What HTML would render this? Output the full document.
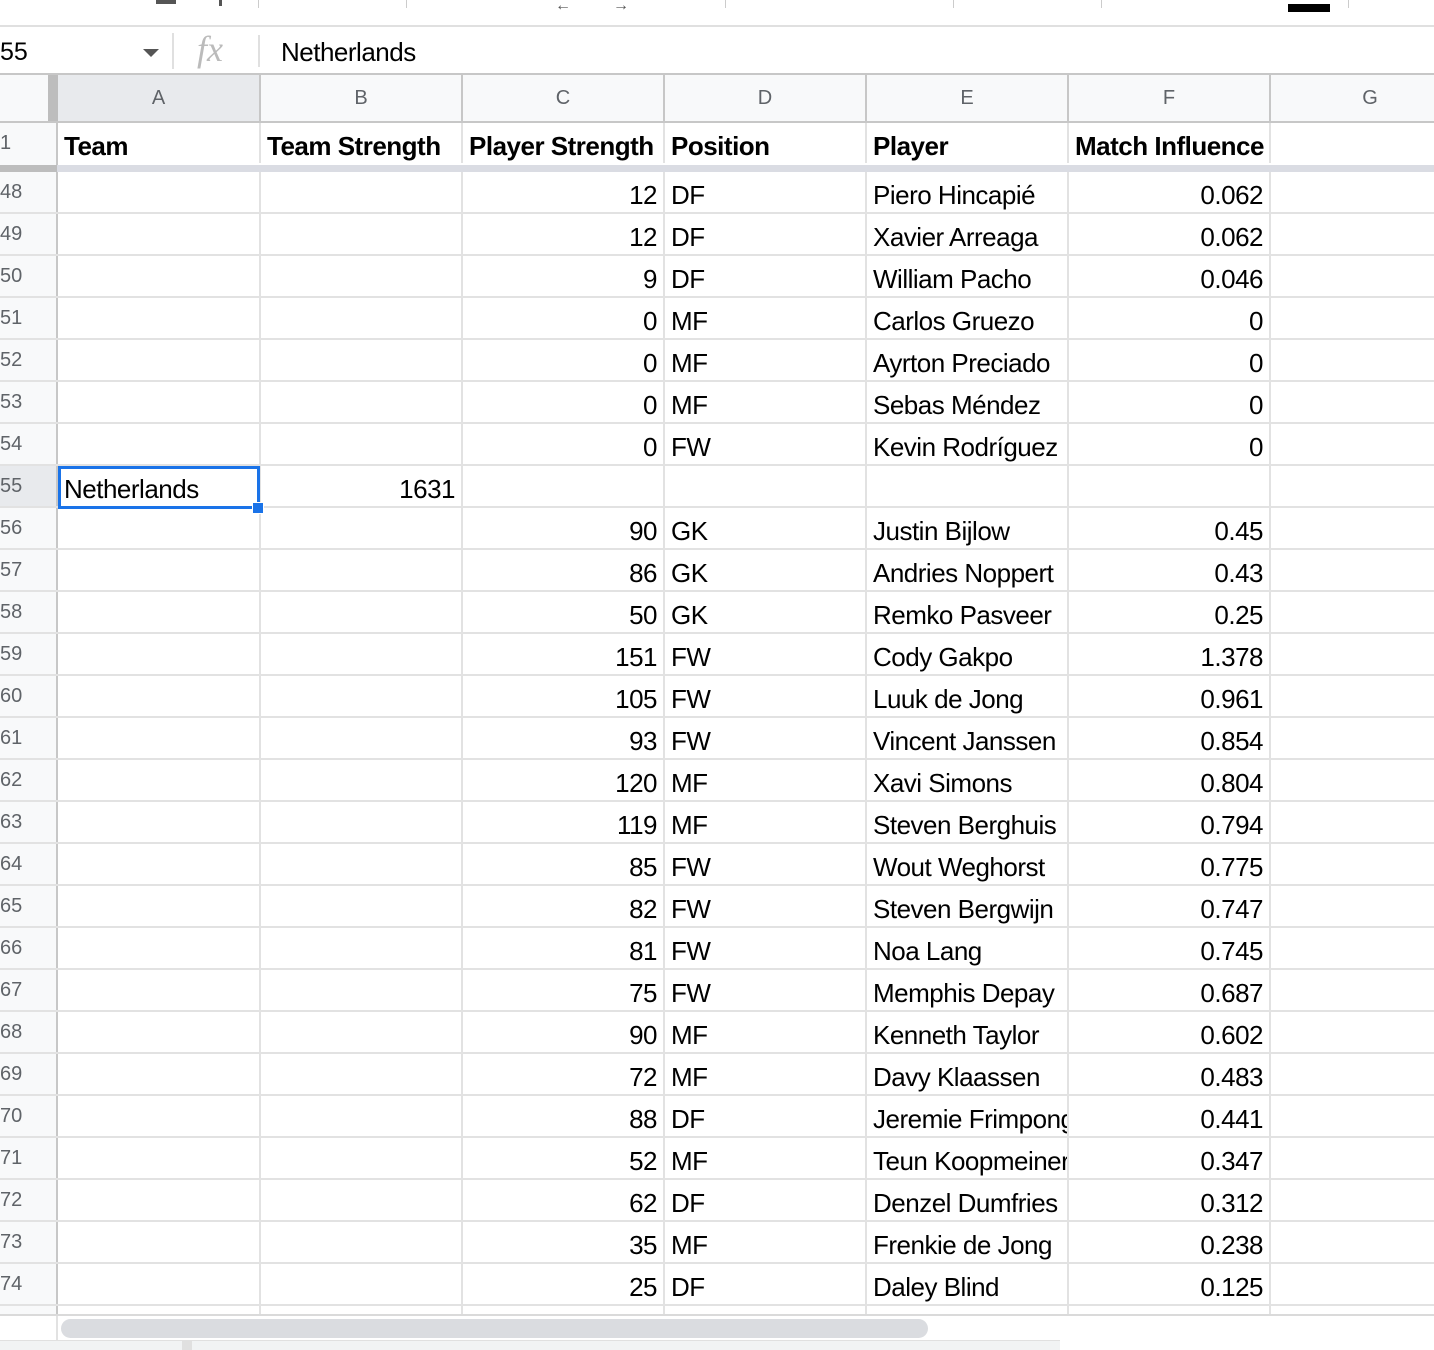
<!DOCTYPE html>
<html><head><meta charset="utf-8"><style>
*{box-sizing:border-box;margin:0;padding:0}
body{width:1434px;height:1350px;overflow:hidden;background:#fff;font-family:"Liberation Sans",Arial,sans-serif;position:relative}
.tb{position:absolute;left:0;top:0;width:1434px;height:27px;border-bottom:2px solid #e0e0e0;background:#fff}
.fb{position:absolute;left:0;top:27px;width:1434px;height:48px;border-bottom:2px solid #c7c7c7;background:#fff}
.hdr{position:absolute;top:75px;left:0;height:48px;width:1434px;background:#f8f9fa;border-bottom:2px solid #c7c7c7}
.hdr div{position:absolute;top:0;height:46px;border-right:2px solid #c7c7c7;text-align:center;line-height:46px;font-size:20px;color:#5f6368}
.row{position:absolute;left:0;width:1434px;height:42px;border-bottom:2px solid #e2e2e2}
.row div{position:absolute;top:0;height:40px;border-right:2px solid #e2e2e2;font-size:26px;line-height:46px;color:#000;white-space:nowrap;overflow:hidden;padding:0 6px;letter-spacing:-0.5px}
.row .n{left:0;width:58px;background:#f8f9fa;border-right:2px solid #c7c7c7;color:#5f6368;font-size:20px;padding:0;line-height:40px;letter-spacing:0}
.a{left:58px;width:203px}.b{left:261px;width:202px;text-align:right}.c{left:463px;width:202px;text-align:right}
.d{left:665px;width:202px}.e{left:867px;width:202px}.f{left:1069px;width:202px;text-align:right}.g{left:1271px;width:165px}
</style></head><body>
<div class="tb">
<div style="position:absolute;left:156px;top:0;width:20px;height:4px;background:#555"></div>
<div style="position:absolute;left:219px;top:0;width:3px;height:6px;background:#555"></div>
<div style="position:absolute;left:258px;top:0;width:1px;height:8px;background:#ccc"></div>
<div style="position:absolute;left:406px;top:0;width:1px;height:8px;background:#ccc"></div>
<div style="position:absolute;left:555px;top:1px;font-size:16px;color:#555;line-height:10px">&#8592;</div>
<div style="position:absolute;left:613px;top:1px;font-size:16px;color:#555;line-height:10px">&#8594;</div>
<div style="position:absolute;left:725px;top:0;width:1px;height:8px;background:#ccc"></div>
<div style="position:absolute;left:953px;top:0;width:1px;height:8px;background:#ccc"></div>
<div style="position:absolute;left:1101px;top:0;width:1px;height:8px;background:#ccc"></div>
<div style="position:absolute;left:1288px;top:4px;width:42px;height:8px;background:#000"></div>
<div style="position:absolute;left:1348px;top:0;width:1px;height:8px;background:#ccc"></div>
</div>
<div class="fb">
<div style="position:absolute;left:0;top:0;font-size:25px;line-height:50px">55</div>
<div style="position:absolute;left:143px;top:22px;width:0;height:0;border-left:8px solid transparent;border-right:8px solid transparent;border-top:8px solid #555"></div>
<div style="position:absolute;left:172px;top:6px;width:2px;height:36px;background:#e0e0e0"></div>
<div style="position:absolute;left:197px;top:0;font-family:'Liberation Serif',serif;font-style:italic;font-size:36px;line-height:44px;color:#bbb">fx</div>
<div style="position:absolute;left:258px;top:8px;width:2px;height:32px;background:#e0e0e0"></div>
<div style="position:absolute;left:281px;top:0;font-size:26px;line-height:50px;letter-spacing:-0.5px">Netherlands</div>
</div>
<div class="hdr">
<div style="left:0;width:57px;border-right:none"></div>
<div style="left:48px;width:10px;background:#bdbdbd;border:none"></div>
<div style="left:58px;width:203px;background:#e8eaed">A</div>
<div style="left:261px;width:202px">B</div>
<div style="left:463px;width:202px">C</div>
<div style="left:665px;width:202px">D</div>
<div style="left:867px;width:202px">E</div>
<div style="left:1069px;width:202px">F</div>
<div style="left:1271px;width:200px">G</div>
</div>
<div class="row" style="top:123px;height:43px;border-bottom:none"><div class="n" style="height:43px;line-height:40px">1</div><div class="a" style="font-weight:bold">Team</div><div class="b" style="font-weight:bold;text-align:left">Team Strength</div><div class="c" style="font-weight:bold;text-align:left;padding-left:6px">Player Strength</div><div class="d" style="font-weight:bold">Position</div><div class="e" style="font-weight:bold">Player</div><div class="f" style="font-weight:bold;text-align:left;padding-left:6px">Match Influence</div><div class="g"></div></div>
<div style="position:absolute;top:165px;left:0;width:57px;height:7px;background:#bdbdbd"></div>
<div style="position:absolute;top:165px;left:57px;width:1377px;height:7px;background:#dadce3"></div>
<div class="row" style="top:172px"><div class="n">48</div><div class="a"></div><div class="b"></div><div class="c">12</div><div class="d">DF</div><div class="e">Piero Hincapié</div><div class="f">0.062</div><div class="g"></div></div>
<div class="row" style="top:214px"><div class="n">49</div><div class="a"></div><div class="b"></div><div class="c">12</div><div class="d">DF</div><div class="e">Xavier Arreaga</div><div class="f">0.062</div><div class="g"></div></div>
<div class="row" style="top:256px"><div class="n">50</div><div class="a"></div><div class="b"></div><div class="c">9</div><div class="d">DF</div><div class="e">William Pacho</div><div class="f">0.046</div><div class="g"></div></div>
<div class="row" style="top:298px"><div class="n">51</div><div class="a"></div><div class="b"></div><div class="c">0</div><div class="d">MF</div><div class="e">Carlos Gruezo</div><div class="f">0</div><div class="g"></div></div>
<div class="row" style="top:340px"><div class="n">52</div><div class="a"></div><div class="b"></div><div class="c">0</div><div class="d">MF</div><div class="e">Ayrton Preciado</div><div class="f">0</div><div class="g"></div></div>
<div class="row" style="top:382px"><div class="n">53</div><div class="a"></div><div class="b"></div><div class="c">0</div><div class="d">MF</div><div class="e">Sebas Méndez</div><div class="f">0</div><div class="g"></div></div>
<div class="row" style="top:424px"><div class="n">54</div><div class="a"></div><div class="b"></div><div class="c">0</div><div class="d">FW</div><div class="e">Kevin Rodríguez</div><div class="f">0</div><div class="g"></div></div>
<div class="row" style="top:466px"><div class="n" style="background:#e8eaed">55</div><div class="a">Netherlands</div><div class="b">1631</div><div class="c"></div><div class="d"></div><div class="e"></div><div class="f"></div><div class="g"></div></div>
<div class="row" style="top:508px"><div class="n">56</div><div class="a"></div><div class="b"></div><div class="c">90</div><div class="d">GK</div><div class="e">Justin Bijlow</div><div class="f">0.45</div><div class="g"></div></div>
<div class="row" style="top:550px"><div class="n">57</div><div class="a"></div><div class="b"></div><div class="c">86</div><div class="d">GK</div><div class="e">Andries Noppert</div><div class="f">0.43</div><div class="g"></div></div>
<div class="row" style="top:592px"><div class="n">58</div><div class="a"></div><div class="b"></div><div class="c">50</div><div class="d">GK</div><div class="e">Remko Pasveer</div><div class="f">0.25</div><div class="g"></div></div>
<div class="row" style="top:634px"><div class="n">59</div><div class="a"></div><div class="b"></div><div class="c">151</div><div class="d">FW</div><div class="e">Cody Gakpo</div><div class="f">1.378</div><div class="g"></div></div>
<div class="row" style="top:676px"><div class="n">60</div><div class="a"></div><div class="b"></div><div class="c">105</div><div class="d">FW</div><div class="e">Luuk de Jong</div><div class="f">0.961</div><div class="g"></div></div>
<div class="row" style="top:718px"><div class="n">61</div><div class="a"></div><div class="b"></div><div class="c">93</div><div class="d">FW</div><div class="e">Vincent Janssen</div><div class="f">0.854</div><div class="g"></div></div>
<div class="row" style="top:760px"><div class="n">62</div><div class="a"></div><div class="b"></div><div class="c">120</div><div class="d">MF</div><div class="e">Xavi Simons</div><div class="f">0.804</div><div class="g"></div></div>
<div class="row" style="top:802px"><div class="n">63</div><div class="a"></div><div class="b"></div><div class="c">119</div><div class="d">MF</div><div class="e">Steven Berghuis</div><div class="f">0.794</div><div class="g"></div></div>
<div class="row" style="top:844px"><div class="n">64</div><div class="a"></div><div class="b"></div><div class="c">85</div><div class="d">FW</div><div class="e">Wout Weghorst</div><div class="f">0.775</div><div class="g"></div></div>
<div class="row" style="top:886px"><div class="n">65</div><div class="a"></div><div class="b"></div><div class="c">82</div><div class="d">FW</div><div class="e">Steven Bergwijn</div><div class="f">0.747</div><div class="g"></div></div>
<div class="row" style="top:928px"><div class="n">66</div><div class="a"></div><div class="b"></div><div class="c">81</div><div class="d">FW</div><div class="e">Noa Lang</div><div class="f">0.745</div><div class="g"></div></div>
<div class="row" style="top:970px"><div class="n">67</div><div class="a"></div><div class="b"></div><div class="c">75</div><div class="d">FW</div><div class="e">Memphis Depay</div><div class="f">0.687</div><div class="g"></div></div>
<div class="row" style="top:1012px"><div class="n">68</div><div class="a"></div><div class="b"></div><div class="c">90</div><div class="d">MF</div><div class="e">Kenneth Taylor</div><div class="f">0.602</div><div class="g"></div></div>
<div class="row" style="top:1054px"><div class="n">69</div><div class="a"></div><div class="b"></div><div class="c">72</div><div class="d">MF</div><div class="e">Davy Klaassen</div><div class="f">0.483</div><div class="g"></div></div>
<div class="row" style="top:1096px"><div class="n">70</div><div class="a"></div><div class="b"></div><div class="c">88</div><div class="d">DF</div><div class="e">Jeremie Frimpong</div><div class="f">0.441</div><div class="g"></div></div>
<div class="row" style="top:1138px"><div class="n">71</div><div class="a"></div><div class="b"></div><div class="c">52</div><div class="d">MF</div><div class="e">Teun Koopmeiners</div><div class="f">0.347</div><div class="g"></div></div>
<div class="row" style="top:1180px"><div class="n">72</div><div class="a"></div><div class="b"></div><div class="c">62</div><div class="d">DF</div><div class="e">Denzel Dumfries</div><div class="f">0.312</div><div class="g"></div></div>
<div class="row" style="top:1222px"><div class="n">73</div><div class="a"></div><div class="b"></div><div class="c">35</div><div class="d">MF</div><div class="e">Frenkie de Jong</div><div class="f">0.238</div><div class="g"></div></div>
<div class="row" style="top:1264px"><div class="n">74</div><div class="a"></div><div class="b"></div><div class="c">25</div><div class="d">DF</div><div class="e">Daley Blind</div><div class="f">0.125</div><div class="g"></div></div>
<div class="row" style="top:1306px;height:10px;border-bottom:none"><div class="n" style="height:10px"></div><div class="a" style="height:10px"></div><div class="b" style="height:10px"></div><div class="c" style="height:10px"></div><div class="d" style="height:10px"></div><div class="e" style="height:10px"></div><div class="f" style="height:10px"></div><div class="g" style="height:10px"></div></div>
<div style="position:absolute;left:58px;top:466px;width:202px;height:43px;border:3px solid #1a73e8"></div>
<div style="position:absolute;left:252px;top:502px;width:12px;height:12px;background:#1a73e8;border:1px solid #fff"></div>
<div style="position:absolute;left:0;top:1314px;width:1434px;height:28px;background:#fff;border-top:2px solid #dadada"></div>
<div style="position:absolute;left:56px;top:1316px;width:2px;height:26px;background:#e2e2e2"></div>
<div style="position:absolute;left:61px;top:1319px;width:867px;height:19px;background:#dadce0;border-radius:10px"></div>
<div style="position:absolute;left:0;top:1340px;width:1060px;height:10px;background:#f1f3f4;border-top:1px solid #e0e0e0"></div>
<div style="position:absolute;left:182px;top:1340px;width:10px;height:10px;background:#e0e0e0"></div>
</body></html>
